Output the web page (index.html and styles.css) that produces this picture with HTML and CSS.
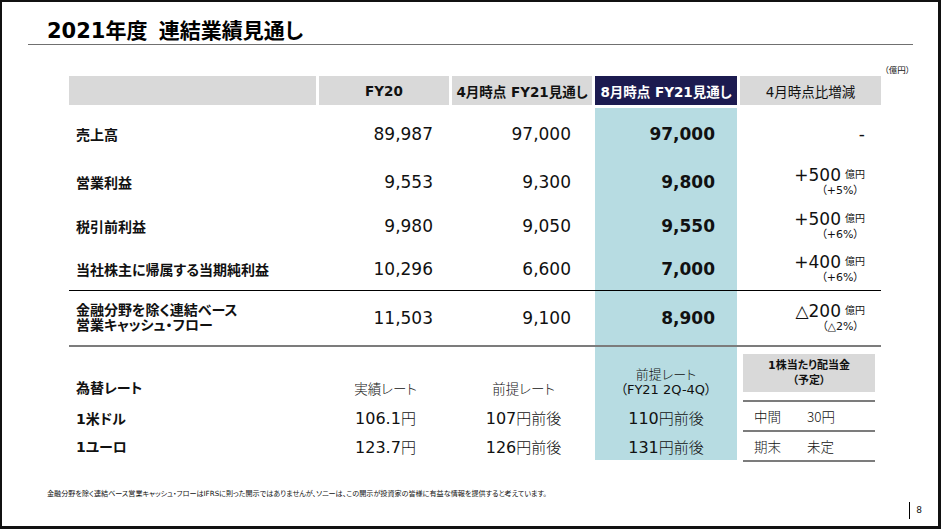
FILE: index.html
```html
<!DOCTYPE html>
<html lang="ja">
<head>
<meta charset="utf-8">
<title>2021年度 連結業績見通し</title>
<link rel="stylesheet" href="styles.css">
</head>
<body>
<div class="slide">
  <h1 class="title">2021年度 連結業績見通し</h1>
  <div class="unit">（億円）</div>
  <div class="table">
    <div class="cols hdr">
      <div class="h"></div>
      <div class="h">FY20</div>
      <div class="h">4月時点 FY21見通し</div>
      <div class="h h-now">8月時点 FY21見通し</div>
      <div class="h h-diff">4月時点比増減</div>
    </div>
    <div class="body">
      <div class="cols row r1">
        <div class="lbl">売上高</div>
        <div class="num">89,987</div>
        <div class="num">97,000</div>
        <div class="num now">97,000</div>
        <div class="diff"><span class="main">-</span></div>
      </div>
      <div class="cols row r2">
        <div class="lbl">営業利益</div>
        <div class="num">9,553</div>
        <div class="num">9,300</div>
        <div class="num now">9,800</div>
        <div class="diff"><span class="main">+500<span class="u">億円</span></span><span class="pct">（+5%）</span></div>
      </div>
      <div class="cols row r3">
        <div class="lbl">税引前利益</div>
        <div class="num">9,980</div>
        <div class="num">9,050</div>
        <div class="num now">9,550</div>
        <div class="diff"><span class="main">+500<span class="u">億円</span></span><span class="pct">（+6%）</span></div>
      </div>
      <div class="cols row r4">
        <div class="lbl">当社株主に帰属する当期純利益</div>
        <div class="num">10,296</div>
        <div class="num">6,600</div>
        <div class="num now">7,000</div>
        <div class="diff"><span class="main">+400<span class="u">億円</span></span><span class="pct">（+6%）</span></div>
      </div>
      <div class="cols row r5">
        <div class="lbl lbl2">金融分野を除く連結ベース<br>営業キャッシュ・フロー</div>
        <div class="num">11,503</div>
        <div class="num">9,100</div>
        <div class="num now">8,900</div>
        <div class="diff"><span class="main">△200<span class="u">億円</span></span><span class="pct">（△2%）</span></div>
      </div>
    </div>
    <div class="cols fx">
      <div class="fl fa">為替レート</div>
      <div class="fc fa jp">実績レート</div>
      <div class="fc fa jp">前提レート</div>
      <div class="fc now fn"><span class="jp">前提レート</span><span>（FY21 2Q-4Q）</span></div>
      <div class="dividend">
        <div class="dv-h">1株当たり配当金<br>（予定）</div>
        <div class="dv-row jp"><span class="dv-k">中間</span><span>30円</span></div>
        <div class="dv-row dv-last jp"><span class="dv-k">期末</span><span>未定</span></div>
      </div>
      <div class="fl">1米ドル</div>
      <div class="fc fv">106.1<span class="yen">円</span></div>
      <div class="fc fv">107<span class="yen">円前後</span></div>
      <div class="fc fv now">110<span class="yen">円前後</span></div>
      <div class="fl">1ユーロ</div>
      <div class="fc fv">123.7<span class="yen">円</span></div>
      <div class="fc fv">126<span class="yen">円前後</span></div>
      <div class="fc fv now">131<span class="yen">円前後</span></div>
    </div>
  </div>
  <p class="note">金融分野を除く連結ベース営業キャッシュ・フローはIFRSに則った開示ではありませんが、ソニーは、この開示が投資家の皆様に有益な情報を提供すると考えています。</p>
  <div class="page">8</div>
</div>
</body>
</html>
```

FILE: styles.css
```css
* {
  box-sizing: border-box;
  margin: 0;
  padding: 0;
}

body {
  margin: 0;
  background: #fff;
  color: #111;
  font-family: "DejaVu Sans", "Noto Sans CJK JP", sans-serif;
  font-feature-settings: "palt";
}

.slide {
  width: 941px;
  height: 529px;
  border: 2px solid #111;
  border-right-width: 3px;
  border-bottom-width: 3px;
  overflow: hidden;
  background: #fff;
}

.title {
  margin-left: 26px;
  width: 885px;
  padding: 17px 0 0 19px;
  line-height: 25px;
  font-size: 21px;
  font-weight: bold;
  word-spacing: 4px;
  border-bottom: 1.5px solid #707070;
  color: #000;
}

.unit {
  margin: 20px 0 0 67px;
  width: 841px;
  text-align: right;
  font-size: 8.5px;
  line-height: 10px;
}

.table {
  margin-left: 67px;
  width: 812px;
}

.cols {
  display: grid;
  grid-template-columns: 250px 133px 143px 142px 144px;
}

.hdr {
  margin-top: 1px;
  height: 29px;
}

.h {
  display: flex;
  align-items: center;
  justify-content: center;
  margin-right: 3px;
  background: #d9d9d9;
  font-size: 13.5px;
  font-weight: bold;
  white-space: nowrap;
}

.h-now {
  margin-right: 0;
  background: #1c1b50;
  color: #fff;
}

.h-diff {
  margin-right: 0;
  margin-left: 3px;
  font-weight: normal;
}

.body {
  margin-top: 3px;
}

.row > div {
  display: flex;
  align-items: center;
}

.r1 { height: 51px; }
.r2 { height: 45px; }
.r3 { height: 44px; }
.r4 { height: 43px; border-bottom: 1px solid #000; }
.r5 { height: 56px; border-bottom: 2px solid #7c7c7c; }

.lbl {
  padding-left: 7px;
  font-size: 14px;
  font-weight: bold;
  white-space: nowrap;
}

.lbl2 {
  line-height: 15px;
}

.num {
  justify-content: flex-end;
  font-size: 17px;
}

.row > .num:nth-child(2) { padding-right: 19px; }
.row > .num:nth-child(3) { padding-right: 24px; }
.row > .num:nth-child(4) { padding-right: 22px; }

.now {
  background: #b7dce2;
}

.num.now {
  font-weight: bold;
}

.row > .diff {
  flex-direction: column;
  align-items: flex-end;
  justify-content: center;
  padding-right: 16px;
}

.main {
  font-size: 17px;
  line-height: 18px;
}

.u {
  margin-left: 4px;
  font-size: 10px;
  vertical-align: 3px;
}

.pct {
  margin-right: 6px;
  font-size: 11px;
  line-height: 14px;
}

.fx {
  grid-template-rows: 56px 29px 28px;
}

.fl {
  display: flex;
  align-items: center;
  padding-left: 7px;
  font-size: 14px;
  font-weight: bold;
}

.fc {
  display: flex;
  align-items: center;
  justify-content: center;
  text-align: center;
  font-size: 13.5px;
}

.jp {
  font-family: "Noto Sans CJK JP", sans-serif;
  font-weight: 300;
}

.fa {
  align-items: flex-end;
  padding-bottom: 5px;
  line-height: 20px;
}

.fn {
  flex-direction: column;
  align-items: center;
  justify-content: flex-end;
  gap: 1px;
  font-size: 13px;
  line-height: 15px;
  padding-bottom: 6px;
}

.fv {
  font-size: 16px;
  align-items: baseline;
  padding-top: 4px;
}

.yen {
  font-size: 15px;
  font-family: "Noto Sans CJK JP", sans-serif;
  font-weight: 300;
}

.dividend {
  grid-column: 5;
  grid-row: 1 / span 3;
  padding: 7px 6px 0;
}

.dv-h {
  display: flex;
  flex-direction: column;
  justify-content: center;
  align-items: center;
  height: 38px;
  background: #d9d9d9;
  font-size: 11px;
  font-weight: bold;
  line-height: 15px;
  text-align: center;
}

.dv-row {
  display: flex;
  align-items: center;
  height: 30px;
  padding-left: 11px;
  border-top: 2px solid #7c7c7c;
  font-size: 13.5px;
}

.dv-h + .dv-row {
  margin-top: 8px;
}

.dv-last {
  height: 32px;
  border-bottom: 2px solid #7c7c7c;
}

.dv-k {
  width: 53px;
}

.note {
  margin: 29px 0 0 45px;
  font-size: 7.1px;
  line-height: 10px;
  white-space: nowrap;
}

.page {
  width: fit-content;
  margin: 3px 16px 0 auto;
  padding-left: 6px;
  border-left: 1.5px solid #000;
  font-size: 9px;
  line-height: 17px;
}
```
